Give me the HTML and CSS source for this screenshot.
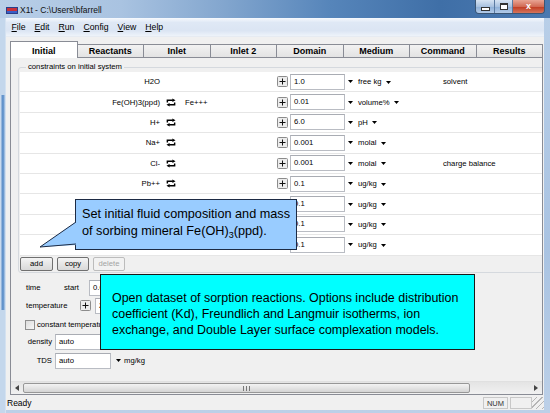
FILE: index.html
```html
<!DOCTYPE html>
<html lang="en">
  <head>
    <meta charset="UTF-8" />
    <meta name="viewport" content="width=device-width, initial-scale=1.0" />
    <title>X1t - C:\Users\bfarrell</title>
    <link rel="stylesheet" href="styles.css">
  </head>
  <body>
    <div class="window">
      <div class="titlebar">
        <svg class="app-icon" width="12" height="7" viewBox="0 0 12 7">
          <rect x="0" y="0" width="12" height="7" fill="#2a3f8a" />
          <rect x="1" y="1" width="10" height="3" fill="#c8323a" />
          <rect x="1" y="4" width="10" height="2" fill="#3a5fc8" />
        </svg>
        <span class="title">X1t - C:\Users\bfarrell</span>
        <div class="controls">
          <span class="ctl ctl_min"><i></i></span>
          <span class="ctl ctl_max"><i></i></span>
          <span class="ctl ctl_close">x</span>
        </div>
      </div>

      <div class="client">
        <ul class="menubar">
          <li><u>F</u>ile</li>
          <li><u>E</u>dit</li>
          <li><u>R</u>un</li>
          <li><u>C</u>onfig</li>
          <li><u>V</u>iew</li>
          <li><u>H</u>elp</li>
        </ul>

        <div class="tabs">
          <div class="tab tab_active">Initial</div>
          <div class="tab">Reactants</div>
          <div class="tab">Inlet</div>
          <div class="tab">Inlet 2</div>
          <div class="tab">Domain</div>
          <div class="tab">Medium</div>
          <div class="tab">Command</div>
          <div class="tab tab_last">Results</div>
        </div>

        <div class="panel">
          <div class="panel-body">
            <fieldset class="group">
              <legend>constraints on initial system</legend>
              <div class="rows">
                <div class="row">
                  <span class="species">H2O</span>
                  <span class="swap"></span>
                  <span class="partner"></span>
                  <span class="plus"><svg width="11" height="11" viewBox="0 0 11 11"><rect x="0.5" y="0.5" width="10" height="10" rx="1" fill="#ececec" stroke="#8c8c8c"/><path d="M2.5 5.5h6M5.5 2.5v6" stroke="#111" stroke-width="1"/></svg></span>
                  <span class="field">1.0</span>
                  <span class="drop"><svg class="caret" viewBox="0 0 5 3"><path d="M0 0h5L2.5 3z"/></svg></span>
                  <span class="unit">free kg <svg class="caret" viewBox="0 0 5 3"><path d="M0 0h5L2.5 3z"/></svg></span>
                  <span class="note">solvent</span>
                </div>
                <div class="row">
                  <span class="species">Fe(OH)3(ppd)</span>
                  <span class="swap"><svg width="11" height="9" viewBox="0 0 11 9"><path d="M1.5 4.5V2H7.5M9.5 4.5V7H3.5" fill="none" stroke="#000" stroke-width="1.6"/><path d="M7 0l3.5 2L7 4zM4 5L0.5 7L4 9z"/></svg></span>
                  <span class="partner">Fe+++</span>
                  <span class="plus"><svg width="11" height="11" viewBox="0 0 11 11"><rect x="0.5" y="0.5" width="10" height="10" rx="1" fill="#ececec" stroke="#8c8c8c"/><path d="M2.5 5.5h6M5.5 2.5v6" stroke="#111" stroke-width="1"/></svg></span>
                  <span class="field">0.01</span>
                  <span class="drop"><svg class="caret" viewBox="0 0 5 3"><path d="M0 0h5L2.5 3z"/></svg></span>
                  <span class="unit">volume% <svg class="caret" viewBox="0 0 5 3"><path d="M0 0h5L2.5 3z"/></svg></span>
                  <span class="note"></span>
                </div>
                <div class="row">
                  <span class="species">H+</span>
                  <span class="swap"><svg width="11" height="9" viewBox="0 0 11 9"><path d="M1.5 4.5V2H7.5M9.5 4.5V7H3.5" fill="none" stroke="#000" stroke-width="1.6"/><path d="M7 0l3.5 2L7 4zM4 5L0.5 7L4 9z"/></svg></span>
                  <span class="partner"></span>
                  <span class="plus"><svg width="11" height="11" viewBox="0 0 11 11"><rect x="0.5" y="0.5" width="10" height="10" rx="1" fill="#ececec" stroke="#8c8c8c"/><path d="M2.5 5.5h6M5.5 2.5v6" stroke="#111" stroke-width="1"/></svg></span>
                  <span class="field">6.0</span>
                  <span class="drop"><svg class="caret" viewBox="0 0 5 3"><path d="M0 0h5L2.5 3z"/></svg></span>
                  <span class="unit">pH <svg class="caret" viewBox="0 0 5 3"><path d="M0 0h5L2.5 3z"/></svg></span>
                  <span class="note"></span>
                </div>
                <div class="row">
                  <span class="species">Na+</span>
                  <span class="swap"><svg width="11" height="9" viewBox="0 0 11 9"><path d="M1.5 4.5V2H7.5M9.5 4.5V7H3.5" fill="none" stroke="#000" stroke-width="1.6"/><path d="M7 0l3.5 2L7 4zM4 5L0.5 7L4 9z"/></svg></span>
                  <span class="partner"></span>
                  <span class="plus"><svg width="11" height="11" viewBox="0 0 11 11"><rect x="0.5" y="0.5" width="10" height="10" rx="1" fill="#ececec" stroke="#8c8c8c"/><path d="M2.5 5.5h6M5.5 2.5v6" stroke="#111" stroke-width="1"/></svg></span>
                  <span class="field">0.001</span>
                  <span class="drop"><svg class="caret" viewBox="0 0 5 3"><path d="M0 0h5L2.5 3z"/></svg></span>
                  <span class="unit">molal <svg class="caret" viewBox="0 0 5 3"><path d="M0 0h5L2.5 3z"/></svg></span>
                  <span class="note"></span>
                </div>
                <div class="row">
                  <span class="species">Cl-</span>
                  <span class="swap"><svg width="11" height="9" viewBox="0 0 11 9"><path d="M1.5 4.5V2H7.5M9.5 4.5V7H3.5" fill="none" stroke="#000" stroke-width="1.6"/><path d="M7 0l3.5 2L7 4zM4 5L0.5 7L4 9z"/></svg></span>
                  <span class="partner"></span>
                  <span class="plus"><svg width="11" height="11" viewBox="0 0 11 11"><rect x="0.5" y="0.5" width="10" height="10" rx="1" fill="#ececec" stroke="#8c8c8c"/><path d="M2.5 5.5h6M5.5 2.5v6" stroke="#111" stroke-width="1"/></svg></span>
                  <span class="field">0.001</span>
                  <span class="drop"><svg class="caret" viewBox="0 0 5 3"><path d="M0 0h5L2.5 3z"/></svg></span>
                  <span class="unit">molal <svg class="caret" viewBox="0 0 5 3"><path d="M0 0h5L2.5 3z"/></svg></span>
                  <span class="note">charge balance</span>
                </div>
                <div class="row">
                  <span class="species">Pb++</span>
                  <span class="swap"><svg width="11" height="9" viewBox="0 0 11 9"><path d="M1.5 4.5V2H7.5M9.5 4.5V7H3.5" fill="none" stroke="#000" stroke-width="1.6"/><path d="M7 0l3.5 2L7 4zM4 5L0.5 7L4 9z"/></svg></span>
                  <span class="partner"></span>
                  <span class="plus"><svg width="11" height="11" viewBox="0 0 11 11"><rect x="0.5" y="0.5" width="10" height="10" rx="1" fill="#ececec" stroke="#8c8c8c"/><path d="M2.5 5.5h6M5.5 2.5v6" stroke="#111" stroke-width="1"/></svg></span>
                  <span class="field">0.1</span>
                  <span class="drop"><svg class="caret" viewBox="0 0 5 3"><path d="M0 0h5L2.5 3z"/></svg></span>
                  <span class="unit">ug/kg <svg class="caret" viewBox="0 0 5 3"><path d="M0 0h5L2.5 3z"/></svg></span>
                  <span class="note"></span>
                </div>
                <div class="row">
                  <span class="species"></span>
                  <span class="swap"></span>
                  <span class="partner"></span>
                  <span class="plus"></span>
                  <span class="field">0.1</span>
                  <span class="drop"><svg class="caret" viewBox="0 0 5 3"><path d="M0 0h5L2.5 3z"/></svg></span>
                  <span class="unit">ug/kg <svg class="caret" viewBox="0 0 5 3"><path d="M0 0h5L2.5 3z"/></svg></span>
                  <span class="note"></span>
                </div>
                <div class="row">
                  <span class="species"></span>
                  <span class="swap"></span>
                  <span class="partner"></span>
                  <span class="plus"></span>
                  <span class="field">0.1</span>
                  <span class="drop"><svg class="caret" viewBox="0 0 5 3"><path d="M0 0h5L2.5 3z"/></svg></span>
                  <span class="unit">ug/kg <svg class="caret" viewBox="0 0 5 3"><path d="M0 0h5L2.5 3z"/></svg></span>
                  <span class="note"></span>
                </div>
                <div class="row">
                  <span class="species"></span>
                  <span class="swap"></span>
                  <span class="partner"></span>
                  <span class="plus"></span>
                  <span class="field">0.1</span>
                  <span class="drop"><svg class="caret" viewBox="0 0 5 3"><path d="M0 0h5L2.5 3z"/></svg></span>
                  <span class="unit">ug/kg <svg class="caret" viewBox="0 0 5 3"><path d="M0 0h5L2.5 3z"/></svg></span>
                  <span class="note"></span>
                </div>
              </div>
              <div class="buttons">
                <span class="btn">add</span>
                <span class="btn">copy</span>
                <span class="btn btn_disabled">delete</span>
              </div>
            </fieldset>

            <div class="settings">
              <div class="line line_time">
                <span class="lbl lbl_time">time</span>
                <span class="lbl lbl_start">start</span>
                <span class="field">0.0</span>
              </div>
              <div class="line line_temp">
                <span class="lbl lbl_temp">temperature</span>
                <span class="plus"><svg width="11" height="11" viewBox="0 0 11 11"><rect x="0.5" y="0.5" width="10" height="10" rx="1" fill="#ececec" stroke="#8c8c8c"/><path d="M2.5 5.5h6M5.5 2.5v6" stroke="#111" stroke-width="1"/></svg></span>
                <span class="field">25</span>
              </div>
              <div class="line line_check">
                <span class="checkbox"></span>
                <span class="lbl">constant temperature</span>
              </div>
              <div class="line line_density">
                <span class="lbl lbl_right">density</span>
                <span class="field field_wide">auto</span>
              </div>
              <div class="line line_tds">
                <span class="lbl lbl_right">TDS</span>
                <span class="field field_wide">auto</span>
                <span class="drop"><svg class="caret" viewBox="0 0 5 3"><path d="M0 0h5L2.5 3z"/></svg></span>
                <span class="lbl">mg/kg</span>
              </div>
            </div>
          </div>

          <div class="hscroll">
            <span class="sb-arrow"><svg width="4" height="6" viewBox="0 0 4 6"><path d="M4 0v6L0 3z" fill="#444"/></svg></span>
            <span class="sb-thumb"><i></i></span>
            <span class="sb-track"></span>
            <span class="sb-arrow"><svg width="4" height="6" viewBox="0 0 4 6"><path d="M0 0v6l4-3z" fill="#444"/></svg></span>
          </div>
        </div>

        <div class="statusbar">
          <span class="status-text">Ready</span>
          <span class="status-pane">NUM</span>
          <span class="status-pane status-pane_empty"></span>
          <span class="grip"></span>
        </div>
      </div>

      <div class="callout callout_blue">
        <svg class="tail" width="38" height="32" viewBox="0 0 38 32">
          <polygon points="1,29 38,3 38,27" fill="#99ccff" />
          <path d="M37 4L1 29L37 26" fill="none" stroke="#1d2b44" stroke-width="1" />
        </svg>
        Set initial fluid composition and mass<br>
        of sorbing mineral Fe(OH)<sub>3</sub>(ppd).
      </div>

      <div class="callout callout_cyan">
        Open dataset of sorption reactions. Options include distribution<br>
        coefficient (Kd), Freundlich and Langmuir isotherms, ion<br>
        exchange, and Double Layer surface complexation models.
      </div>
    </div>
  </body>
</html>
```

FILE: styles.css
```css
* {
  box-sizing: border-box;
}

body {
  margin: 0;
  width: 550px;
  height: 413px;
  overflow: hidden;
  font-family: "Liberation Sans", Arial, sans-serif;
  color: #000;
  background: #b8cde6;
}

.window {
  position: relative;
  width: 550px;
  height: 413px;
  background:
    linear-gradient(to right, #c9daee 0, #c9daee 1px, #5f90c9 2px, #6d9bd0 4px, #cddcee 5px, transparent 6px) no-repeat 0 95px / 6px 215px,
    linear-gradient(to right, #c4d7ec 0, #c4d7ec 5px, #e4ecf6 6px, transparent 6px),
    linear-gradient(to bottom, #b9cfe8, #a9c3e2 60%, #bcd0e8);
}

/* title bar */
.titlebar {
  position: relative;
  height: 18px;
  display: flex;
  align-items: center;
  padding-left: 6px;
  background: linear-gradient(to right, #b8cee7 0%, #a9c3e1 22%, #84a7cf 40%, #5685ba 60%, #3f6fa7 80%, #4b79b0 100%);
}

.app-icon {
  display: block;
  margin-top: 2px;
}

.title {
  margin-left: 2px;
  font-size: 8.5px;
  color: #111;
  margin-top: 2px;
}

.controls {
  position: absolute;
  top: 0;
  left: 475px;
  display: flex;
  height: 14px;
  border: 1px solid #3b5675;
  border-top: 0;
  border-radius: 0 0 4px 4px;
  overflow: hidden;
}

.ctl {
  display: flex;
  align-items: center;
  justify-content: center;
  height: 13px;
  width: 19px;
  background: linear-gradient(to bottom, #d6e3f2, #a9c2e0 50%, #8caed6 51%, #b3cbe8);
  border-right: 1px solid #5b7aa0;
}

.ctl_max {
  width: 18px;
}

.ctl_close {
  width: 31px;
  border-right: 0;
  background: linear-gradient(to bottom, #e8a493, #d26b55 50%, #c0391f 51%, #d5755c);
  color: #fff;
  font-size: 9px;
  font-weight: bold;
  line-height: 1;
}

.ctl_min i {
  display: block;
  width: 7px;
  height: 2px;
  margin-top: 5px;
  background: #fff;
  border: 1px solid #333;
  box-sizing: content-box;
}

.ctl_max i {
  display: block;
  width: 6px;
  height: 4px;
  border: 1px solid #333;
  border-top-width: 2px;
  background: #fff;
  box-sizing: content-box;
}

/* client area */
.client {
  margin: 0 6px;
  height: 392px;
  background: #f0f0f0;
  display: flex;
  flex-direction: column;
}

.menubar {
  list-style: none;
  margin: 0;
  padding: 0 0 0 1px;
  height: 19px;
  display: flex;
  align-items: center;
  background: linear-gradient(to bottom, #f6f9fd 0%, #dfe8f5 25%, #dbe5f3 70%, #eef3fa 100%);
  border-bottom: 1px solid #e6ebf2;
  font-size: 8.7px;
}

.menubar li {
  padding: 0 4.5px;
}

.menubar u {
  text-decoration: underline;
}

.tabs {
  height: 20px;
  margin-left: 4px;
  margin-right: 1px;
  display: flex;
  align-items: flex-end;
  position: relative;
  z-index: 1;
}

.tab {
  flex: 1;
  height: 13px;
  line-height: 12px;
  text-align: center;
  font-size: 9px;
  font-weight: bold;
  border: 1px solid #898c95;
  border-right: 0;
  border-bottom: 0;
  background: linear-gradient(to bottom, #f2f2f2, #e3e3e3);
}

.tab_last {
  border-right: 1px solid #898c95;
}

.tab_active {
  height: 17px;
  margin-bottom: -1px;
  padding-top: 3px;
  background: #fff;
  border-right: 1px solid #898c95;
  margin-right: -1px;
  position: relative;
}

.tab_active + .tab {
  border-left: 0;
  padding-left: 1px;
}

.panel {
  height: 338px;
  margin: 0 1px 0 4px;
  border: 1px solid #898c95;
  background: #f0f0f0;
  overflow: hidden;
  display: flex;
  flex-direction: column;
  font-size: 7.7px;
}

.panel-body {
  flex: 1;
  overflow: hidden;
}

/* constraints group */
.group {
  margin: 4px -40px 0 7px;
  padding: 0 0 1px 1px;
  min-width: 0;
  border: 1px solid #d5d9de;
  border-radius: 3px;
}

.group legend {
  margin-left: 6px;
  padding: 0 2px;
  line-height: 10px;
  font-size: 7.7px;
}

.row {
  display: grid;
  grid-template-columns: 140px 16px 100px 12px 57px 11px 87px 1fr;
  align-items: center;
  height: 20.4px;
  background: #fff;
  border-bottom: 1px solid #e6e6e6;
}

.species {
  text-align: right;
}

.swap {
  padding-left: 6px;
  display: flex;
}

.partner {
  padding-left: 9px;
}

.plus {
  display: flex;
  padding-left: 1px;
}

.field {
  display: block;
  width: 55px;
  height: 16px;
  margin-left: 2px;
  padding-left: 3px;
  line-height: 14px;
  background: #fff;
  border: 1px solid #b9bcc3;
  border-top-color: #a9acb3;
}

.drop {
  display: flex;
  padding-left: 3px;
}

.caret {
  width: 5px;
  height: 3px;
  display: inline-block;
  vertical-align: middle;
}

.unit {
  padding-left: 2px;
}

.unit .caret {
  margin-left: 2px;
}

.buttons {
  display: flex;
  gap: 4px;
  margin-top: 1.4px;
  height: 14px;
}

.btn {
  width: 33px;
  height: 14px;
  line-height: 12px;
  text-align: center;
  border: 1px solid #707070;
  border-radius: 2px;
  background: linear-gradient(to bottom, #f4f4f4, #e6e6e6 50%, #d9d9d9);
}

.btn + .btn {
  width: 32px;
}

.btn_disabled {
  color: #a3a3a3;
  border-color: #bcbcbc;
  background: #f2f2f2;
}

/* lower settings */
.settings {
  padding-left: 15px;
}

.line {
  display: flex;
  align-items: center;
  height: 16px;
}

.line_time {
  margin-top: 7px;
}

.line_temp {
  margin-top: 2px;
}

.line_check {
  margin-top: 2px;
  height: 18px;
}

.line_density {
  margin-top: 0;
}

.line_tds {
  margin-top: 3px;
}

.lbl_time {
  width: 38px;
}

.lbl_start {
  width: 23px;
}

.lbl_temp {
  width: 53px;
}

.line_temp .plus {
  width: 14px;
}

.line_temp .field {
  margin-left: 2px;
}

.checkbox {
  width: 10px;
  height: 10px;
  margin-right: 2px;
  margin-left: -1px;
  border: 1px solid #8f8f8f;
  background: linear-gradient(135deg, #dcdcdc, #f7f7f7);
}

.lbl_right {
  width: 26px;
  text-align: right;
}

.field_wide {
  width: 56px;
  margin-left: 3px;
}

.line_tds .drop {
  padding-left: 5px;
  padding-right: 3px;
}

/* horizontal scrollbar */
.hscroll {
  height: 13px;
  display: flex;
  background: linear-gradient(to bottom, #e4e4e4, #f1f1f1);
  border-top: 1px solid #e0e0e0;
}

.sb-arrow {
  width: 12px;
  display: flex;
  align-items: center;
  justify-content: center;
}

.sb-thumb {
  width: 447px;
  margin: 1px 0;
  border: 1px solid #979797;
  border-radius: 2px;
  background: linear-gradient(to bottom, #f3f3f3, #e4e4e4 50%, #d4d4d4);
  display: flex;
  align-items: center;
  justify-content: center;
}

.sb-thumb i {
  display: block;
  width: 7px;
  height: 5px;
  background: repeating-linear-gradient(to right, #777 0 1px, transparent 1px 3px);
}

.sb-track {
  flex: 1;
}

/* status bar */
.statusbar {
  height: 15px;
  display: flex;
  align-items: center;
  font-size: 8.5px;
}

.status-text {
  flex: 1;
  padding-left: 1px;
}

.status-pane {
  width: 25px;
  height: 12px;
  line-height: 11px;
  text-align: center;
  font-size: 7.5px;
  color: #333;
  border: 1px solid #c8c8c8;
}

.status-pane_empty {
  width: 22px;
  margin-left: 2px;
}

.grip {
  width: 12px;
  height: 12px;
  background: repeating-linear-gradient(135deg, transparent 0 3px, #b5b5b5 3px 4px);
}

/* callouts over the dialog */
.callout {
  position: absolute;
  font-family: "Liberation Sans", Arial, sans-serif;
  white-space: nowrap;
  color: #000;
}

.callout_blue {
  left: 75px;
  top: 199px;
  width: 222px;
  height: 51px;
  padding: 6px 0 0 6px;
  font-size: 12.7px;
  line-height: 17px;
  background: #99ccff;
  border: 1px solid #1d2b44;
}

.callout_blue sub {
  font-size: 9px;
  vertical-align: -3px;
  line-height: 0;
}

.tail {
  position: absolute;
  left: -37px;
  top: 18px;
}

.callout_cyan {
  left: 100px;
  top: 274px;
  width: 375px;
  height: 76px;
  padding: 14.5px 0 0 11px;
  font-size: 12.45px;
  line-height: 16px;
  background: #00ffff;
  border: 1.5px solid #1a1a1a;
}
```
